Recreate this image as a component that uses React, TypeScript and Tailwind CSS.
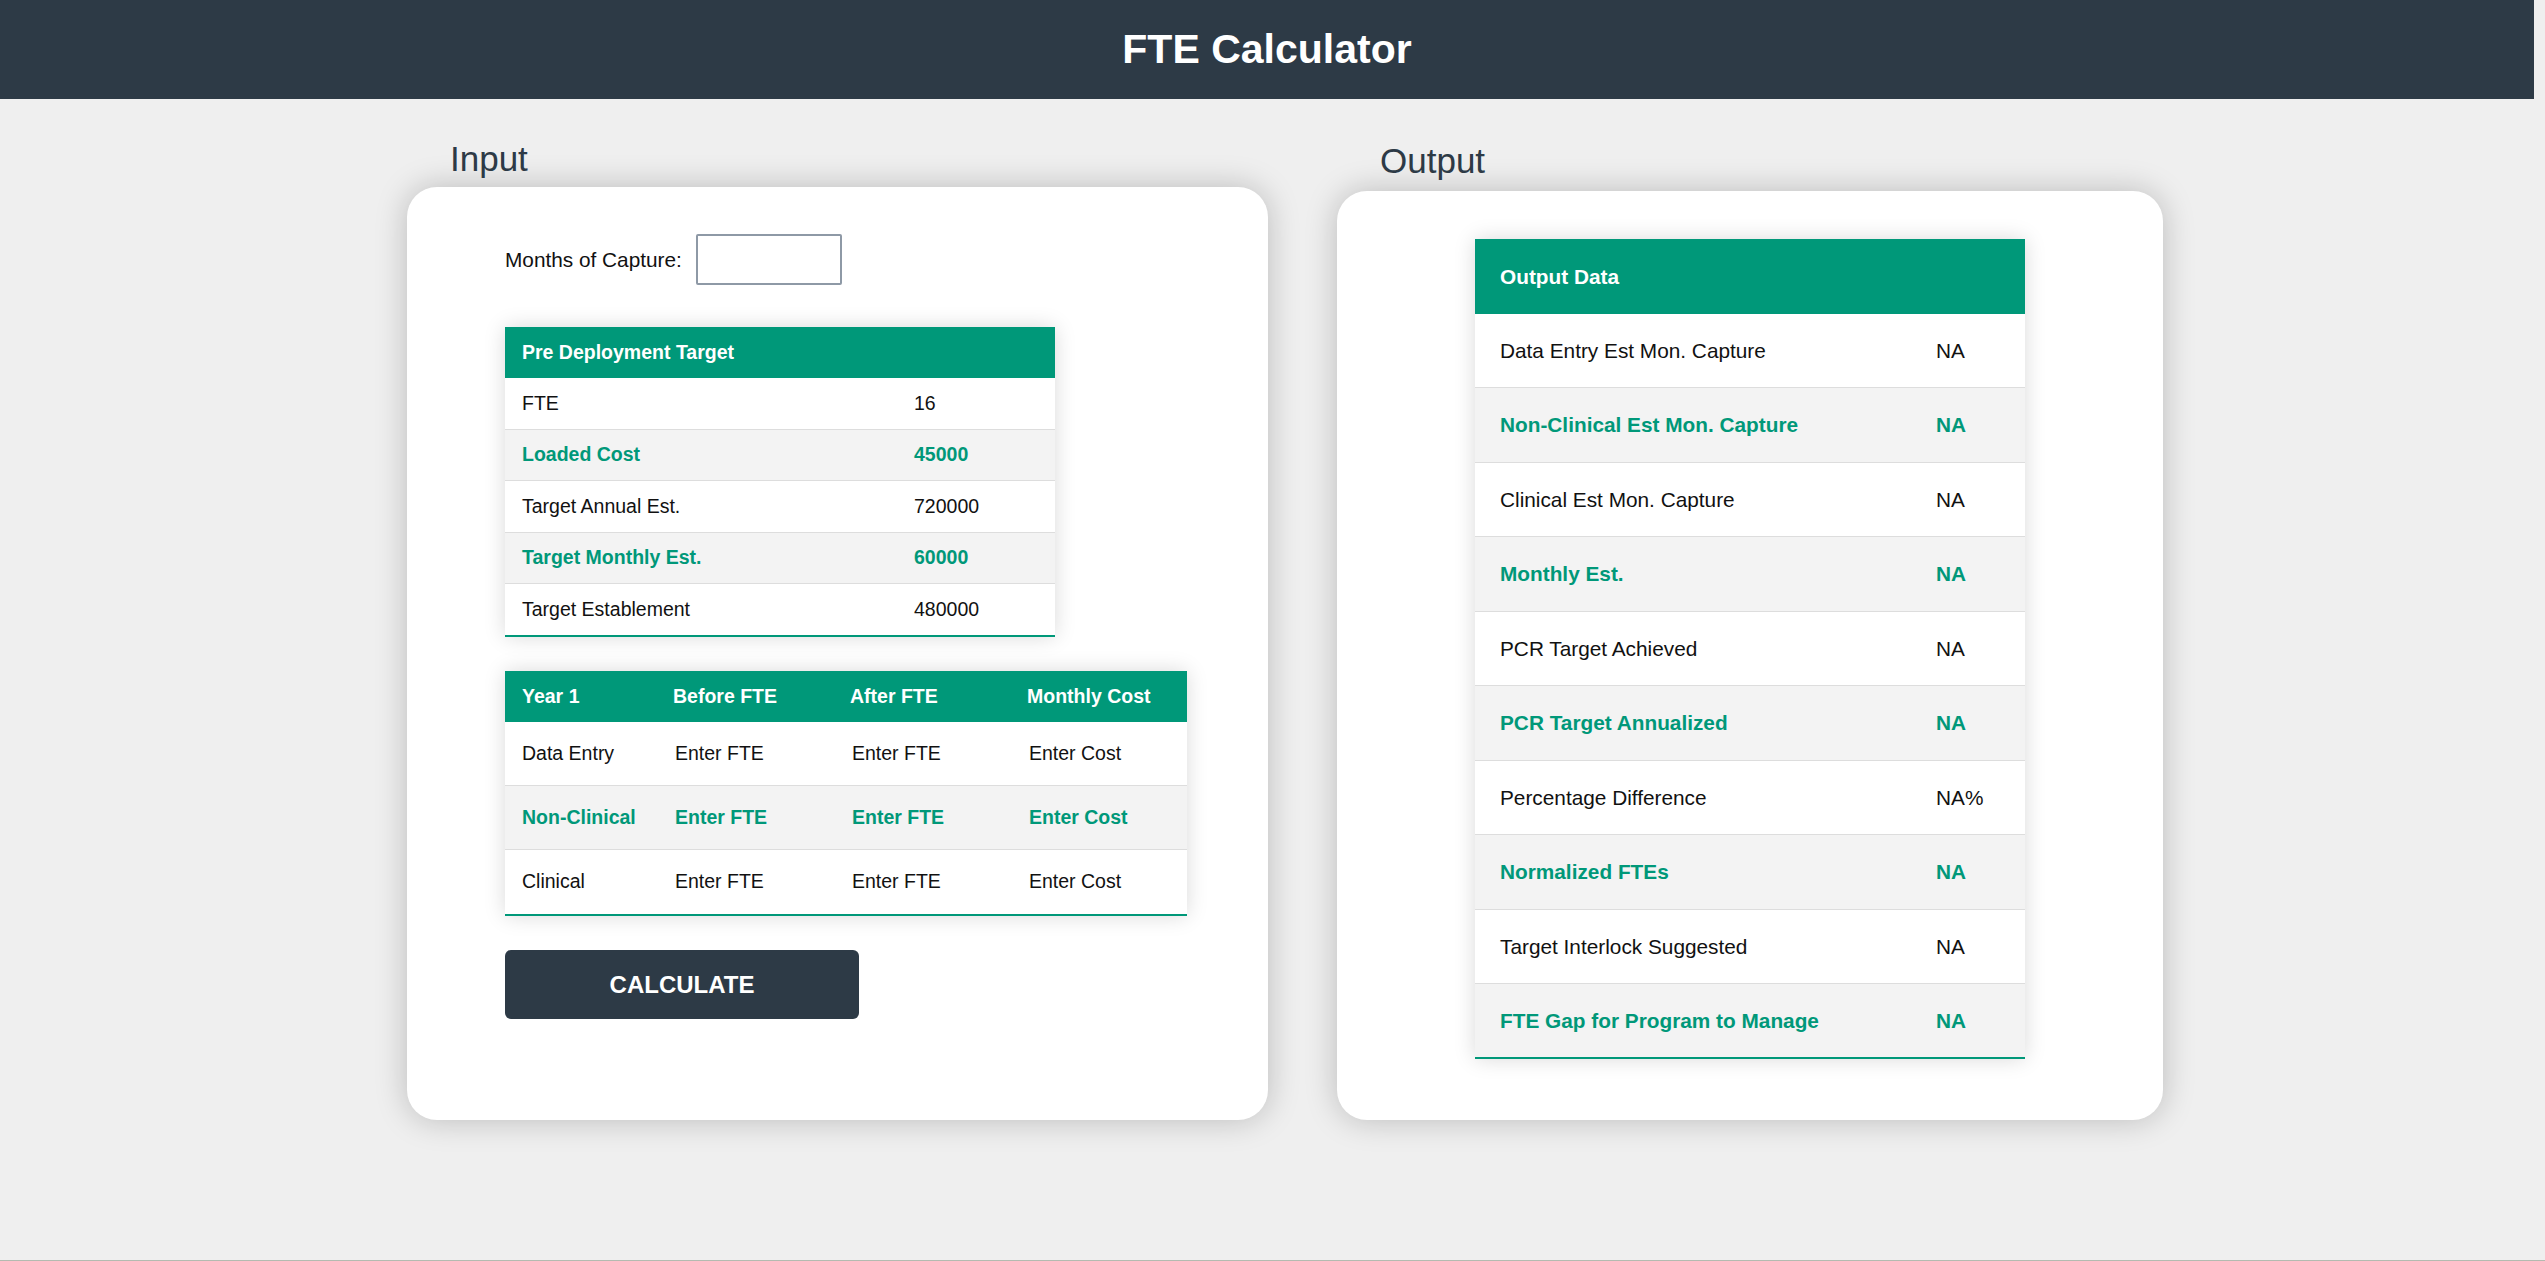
import React from 'react';

const font = { fontFamily: '"Liberation Sans", Arial, sans-serif' };

const preDeployment = [
  { label: 'FTE', value: '16' },
  { label: 'Loaded Cost', value: '45000' },
  { label: 'Target Annual Est.', value: '720000' },
  { label: 'Target Monthly Est.', value: '60000' },
  { label: 'Target Establement', value: '480000' },
];

const yearRows = ['Data Entry', 'Non-Clinical', 'Clinical'];

const outputRows = [
  { label: 'Data Entry Est Mon. Capture', value: 'NA' },
  { label: 'Non-Clinical Est Mon. Capture', value: 'NA' },
  { label: 'Clinical Est Mon. Capture', value: 'NA' },
  { label: 'Monthly Est.', value: 'NA' },
  { label: 'PCR Target Achieved', value: 'NA' },
  { label: 'PCR Target Annualized', value: 'NA' },
  { label: 'Percentage Difference', value: 'NA%' },
  { label: 'Normalized FTEs', value: 'NA' },
  { label: 'Target Interlock Suggested', value: 'NA' },
  { label: 'FTE Gap for Program to Manage', value: 'NA' },
];

function rowClass(i: number, last: boolean) {
  const even = i % 2 === 1;
  return [
    'flex items-center',
    even ? 'bg-[#f3f3f3] text-[#009879] font-bold' : 'bg-white text-[#111]',
    last ? 'border-b-2 border-[#009879]' : 'border-b border-[#dddddd]',
  ].join(' ');
}

function PreDeploymentTable() {
  return (
    <div className="w-[550px] shadow-[0_0_20px_rgba(0,0,0,0.15)] text-[19.5px]">
      <div className="flex h-[51px] items-center bg-[#009879] px-[17px] font-bold text-white">
        Pre Deployment Target
      </div>
      {preDeployment.map((r, i) => (
        <div
          key={r.label}
          className={`${rowClass(i, i === preDeployment.length - 1)} ${i === preDeployment.length - 1 ? 'h-[53px]' : 'h-[51.5px]'}`}
        >
          <div className="w-[392px] pl-[17px]">{r.label}</div>
          <div className="pl-[17px]">{r.value}</div>
        </div>
      ))}
    </div>
  );
}

function YearTable() {
  const cols = ['w-[151px]', 'w-[177px]', 'w-[177px]', 'w-[177px]'];
  return (
    <div className="w-[682px] shadow-[0_0_20px_rgba(0,0,0,0.15)] text-[19.5px]">
      <div className="flex h-[51px] items-center bg-[#009879] font-bold text-white">
        {['Year 1', 'Before FTE', 'After FTE', 'Monthly Cost'].map((h, i) => (
          <div key={h} className={`${cols[i]} pl-[17px]`}>
            {h}
          </div>
        ))}
      </div>
      {yearRows.map((r, i) => {
        const even = i % 2 === 1;
        const last = i === yearRows.length - 1;
        const ph = even
          ? 'placeholder:text-[#009879] font-bold'
          : 'placeholder:text-[#111]';
        return (
          <div key={r} className={`${rowClass(i, last)} ${last ? 'h-[66px]' : 'h-[64px]'}`}>
            <div className={`${cols[0]} pl-[17px]`}>{r}</div>
            {['Enter FTE', 'Enter FTE', 'Enter Cost'].map((p, j) => (
              <div key={j} className={`${cols[j + 1]} pl-[17px] pr-[8px]`}>
                <input
                  placeholder={p}
                  className={`w-full bg-transparent px-[2px] outline-none ${ph}`}
                  style={font}
                />
              </div>
            ))}
          </div>
        );
      })}
    </div>
  );
}

function OutputTable() {
  return (
    <div className="w-[550px] shadow-[0_0_20px_rgba(0,0,0,0.15)] text-[20.8px]">
      <div className="flex h-[74.5px] items-center bg-[#009879] px-[25px] font-bold text-white">
        Output Data
      </div>
      {outputRows.map((r, i) => (
        <div key={r.label} className={`${rowClass(i, i === outputRows.length - 1)} h-[74.5px]`}>
          <div className="w-[436px] pl-[25px]">{r.label}</div>
          <div className="pl-[25px]">{r.value}</div>
        </div>
      ))}
    </div>
  );
}

export default function App() {
  return (
    <div className="relative h-[1261px] w-full overflow-hidden bg-[#efefef]" style={font}>
      {/* Header */}
      <header className="flex h-[99px] w-[2534px] items-center justify-center bg-[#2d3a46]">
        <h1 className="text-[41px] font-bold text-white">FTE Calculator</h1>
      </header>

      <div className="flex items-start">
        {/* Input */}
        <section className="ml-[407px] mt-[40px]">
          <h2 className="mb-[8px] ml-[43px] text-[35px] leading-[40px] text-[#2d3a46]">Input</h2>
          <div className="h-[933px] w-[861px] rounded-[30px] bg-white pl-[98px] pt-[47px] shadow-[0_0_32px_rgba(0,0,0,0.22)]">
            <div className="flex items-center">
              <label className="text-[20.8px] text-[#111]">Months of Capture:</label>
              <input className="ml-[14px] h-[51px] w-[146px] rounded-[2px] border-2 border-[#8e99a6] bg-white px-2 text-[20px] outline-none" />
            </div>
            <div className="mt-[42px]">
              <PreDeploymentTable />
            </div>
            <div className="mt-[34px]">
              <YearTable />
            </div>
            <button className="mt-[34px] h-[69px] w-[354px] rounded-[6px] bg-[#2d3a46] text-[24px] font-bold text-white">
              CALCULATE
            </button>
          </div>
        </section>

        {/* Output */}
        <section className="ml-[69px] mt-[42px]">
          <h2 className="mb-[10px] ml-[43px] text-[35px] leading-[40px] text-[#2d3a46]">Output</h2>
          <div className="h-[929px] w-[826px] rounded-[30px] bg-white pl-[138px] pt-[48px] shadow-[0_0_32px_rgba(0,0,0,0.22)]">
            <OutputTable />
          </div>
        </section>
      </div>

      <div className="absolute bottom-0 left-0 h-px w-full bg-[#b4bab0]" />
    </div>
  );
}
